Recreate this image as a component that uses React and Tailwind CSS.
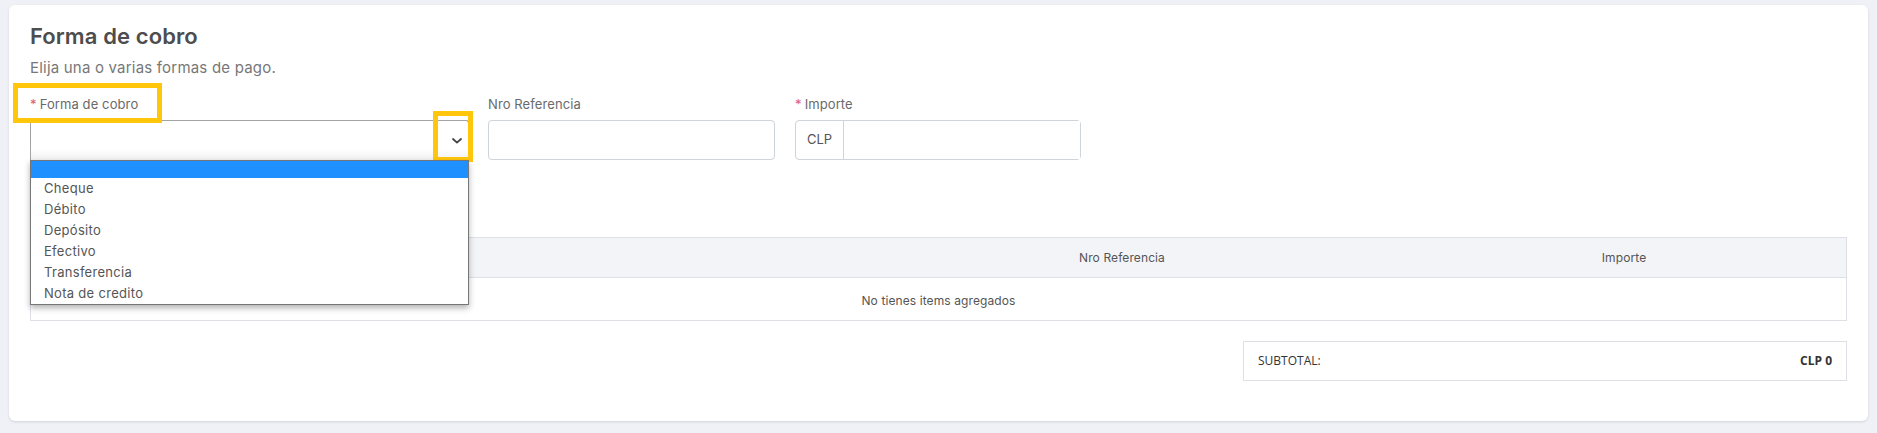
import React from 'react';

const paymentOptions = ['Cheque', 'Débito', 'Depósito', 'Efectivo', 'Transferencia', 'Nota de credito'];

function Label({ required, children }) {
  return (
    <label className="block h-[18px] text-[13px] leading-[18px] tracking-[0.1px] text-[#6a6a6a]">
      {required && <span className="mr-[3px] text-[#e0577a]">*</span>}
      {children}
    </label>
  );
}

function Chevron() {
  return (
    <svg width="10" height="6" viewBox="0 0 10 6" fill="none" className="text-[#444]">
      <path d="M1 1l4 3.6L9 1" stroke="currentColor" strokeWidth="1.8" strokeLinecap="round" strokeLinejoin="round" />
    </svg>
  );
}

// yellow annotation frame drawn over the form
function Highlight({ className }) {
  return <div className={`pointer-events-none absolute border-[5px] border-[#ffc60b] ${className}`} />;
}

export default function App() {
  return (
    <div className="relative h-[433px] w-[1877px] bg-[#f0f1f6] px-[9px] pt-[5px] font-['Inter',sans-serif]">
      <div className="h-[416px] rounded-md bg-white px-[21px] pt-[16px] shadow-sm">
        <h2 className="text-[22px] font-semibold leading-[30px] tracking-[0.1px] text-[#4d4d4d]">Forma de cobro</h2>
        <p className="mt-[6px] text-[15px] leading-[22px] tracking-[0.2px] text-[#777]">Elija una o varias formas de pago.</p>

        <div className="mt-[16px] flex items-start">
          {/* forma de cobro select, open */}
          <div className="relative w-[439px]">
            <Label required>Forma de cobro</Label>
            <div className="mt-[7px] flex h-[40px] items-center justify-end rounded-t-[3px] border border-b-0 border-[#a3a3a3] bg-gradient-to-b from-white from-70% to-[#f1f1f1] pr-[6px]">
              <Chevron />
            </div>
            <ul className="absolute left-0 top-full z-10 w-full border border-[#767676] bg-white text-[13px] tracking-[0.3px] text-[#555] shadow-[0_3px_6px_rgba(0,0,0,0.3)]">
              <li className="h-[17px] bg-[#1e90ff]" />
              {paymentOptions.map((opt) => (
                <li key={opt} className="h-[21px] pl-[13px] leading-[21px]">
                  {opt}
                </li>
              ))}
            </ul>
          </div>

          <div className="ml-[19px] w-[287px]">
            <Label>Nro Referencia</Label>
            <input className="mt-[7px] block h-[40px] w-full rounded-[4px] border border-[#ced4da] bg-white" />
          </div>

          <div className="ml-[20px] w-[286px]">
            <Label required>Importe</Label>
            <div className="mt-[7px] flex h-[40px] w-full rounded-[4px] border border-[#ced4da]">
              <span className="flex w-[48px] shrink-0 items-center justify-center border-r border-[#ced4da] text-[13px] text-[#555]">
                CLP
              </span>
              <input className="min-w-0 flex-1 bg-white" />
            </div>
          </div>
        </div>

        {/* items table; first column header sits under the open list */}
        <div className="mt-[77px] border border-[#dde1e6] text-[12px] tracking-[0.1px] text-[#555]">
          <div className="grid h-[40px] grid-cols-[712px_758px_246px_99px] items-center border-b border-[#dde1e6] bg-[#f3f4f7]">
            <span />
            <span className="text-center">Nro Referencia</span>
            <span className="text-center">Importe</span>
            <span />
          </div>
          <div className="flex h-[42px] items-center justify-center pt-[4px]">No tienes items agregados</div>
        </div>

        <div className="mt-[20px] flex justify-end">
          <div className="flex h-[40px] w-[604px] items-center justify-between border border-[#dde1e6] px-[14px] font-['Open_Sans',sans-serif] text-[12px] text-[#333]">
            <span>SUBTOTAL:</span>
            <span className="font-bold">CLP 0</span>
          </div>
        </div>
      </div>

      <Highlight className="left-[13px] top-[83px] h-[40px] w-[149px]" />
      <Highlight className="left-[433px] top-[111px] h-[51px] w-[40px]" />
    </div>
  );
}
